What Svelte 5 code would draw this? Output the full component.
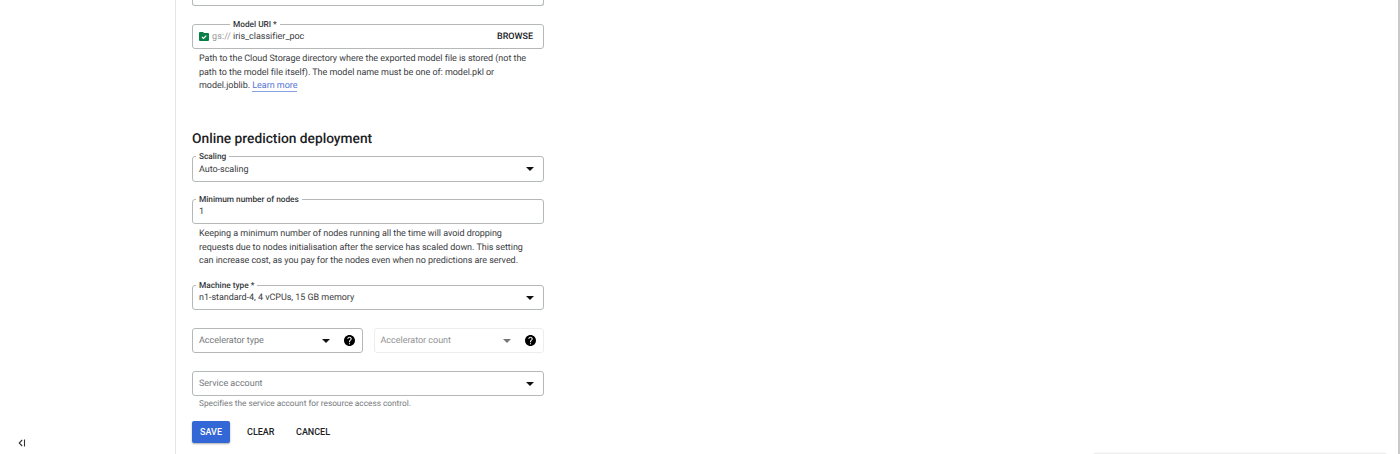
<script>
  const uriHelp = [
    'Path to the Cloud Storage directory where the exported model file is stored (not the',
    'path to the model file itself). The model name must be one of: model.pkl or',
  ];
  const nodeHelp = [
    'Keeping a minimum number of nodes running all the time will avoid dropping',
    'requests due to nodes initialisation after the service has scaled down. This setting',
    'can increase cost, as you pay for the nodes even when no predictions are served.',
  ];
</script>

{#snippet arrow()}
  <svg class="arrow" viewBox="0 0 8 4"><path d="M0 0h8L4 4z" /></svg>
{/snippet}

{#snippet help()}
  <svg class="help" viewBox="2 2 20 20"><path d="M12 2C6.48 2 2 6.48 2 12s4.48 10 10 10 10-4.48 10-10S17.52 2 12 2zm1 17h-2v-2h2v2zm2.07-7.75-.9.92C13.45 12.9 13 13.5 13 15h-2v-.5c0-1.1.45-2.1 1.17-2.83l1.24-1.26c.37-.36.59-.86.59-1.41 0-1.1-.9-2-2-2s-2 .9-2 2H8c0-2.21 1.79-4 4-4s4 1.79 4 4c0 .88-.36 1.68-.93 2.25z" /></svg>
{/snippet}

<div class="page">
  <aside>
    <svg class="collapse" viewBox="0 0 8 8"><path d="M4.2 1 1.2 4l3 3M6.5.6v6.8" /></svg>
  </aside>
  <main>
    <div class="field previous"></div>

    <div class="field uri">
      <span class="label offset">Model URI *</span>
      <svg class="folder" viewBox="0 0 10 9"><path d="M1 0h3l1 1h4a1 1 0 0 1 1 1V8a1 1 0 0 1-1 1H1a1 1 0 0 1-1-1V1a1 1 0 0 1 1-1z" fill="#087f43" /><path d="m3 5 1.500 1.500L7.300 3.700" fill="none" stroke="#fff" stroke-width="1.200" /></svg>
      <span class="prefix">gs://</span>
      <span class="value path">iris_classifier_poc</span>
      <span class="browse">BROWSE</span>
    </div>
    <div class="hint">
      {#each uriHelp as line}<div>{line}</div>{/each}
      <div>model.joblib. <a href="#learn">Learn more</a></div>
    </div>

    <h2>Online prediction deployment</h2>

    <div class="field">
      <span class="label">Scaling</span>
      <span class="value">Auto-scaling</span>
      {@render arrow()}
    </div>

    <div class="field nodes">
      <span class="label">Minimum number of nodes</span>
      <span class="value">1</span>
    </div>
    <div class="hint">
      {#each nodeHelp as line}<div>{line}</div>{/each}
    </div>

    <div class="field machine">
      <span class="label">Machine type *</span>
      <span class="value">n1-standard-4, 4 vCPUs, 15 GB memory</span>
      {@render arrow()}
    </div>

    <div class="pair">
      <div class="field">
        <span class="placeholder">Accelerator type</span>
        {@render arrow()}{@render help()}
      </div>
      <div class="field disabled">
        <span class="placeholder">Accelerator count</span>
        {@render arrow()}{@render help()}
      </div>
    </div>

    <div class="field account">
      <span class="placeholder">Service account</span>
      {@render arrow()}
    </div>
    <div class="note">Specifies the service account for resource access control.</div>

    <div class="actions">
      <button class="save">SAVE</button>
      <button class="clear">CLEAR</button>
      <button class="cancel">CANCEL</button>
    </div>
  </main>
  <div class="toast"></div>
  <div class="scroll"></div>
</div>

<style>
  :global(body) { margin: 0; background: #fff; }
  .page {
    position: relative;
    display: flex;
    height: 454px;
    overflow: hidden;
    background: #fff;
    color: #3c4043;
    font: 9px/14px Roboto, sans-serif;
    letter-spacing: -0.04px;
    text-rendering: geometricPrecision;
    white-space: nowrap;
  }
  aside {
    box-sizing: border-box;
    width: 176px;
    border-right: 1px solid #e4e4e4;
    display: flex;
    align-items: flex-end;
    padding: 0 0 7px 17.5px;
  }
  .collapse { width: 8px; height: 8px; fill: none; stroke: #333; stroke-width: 1.1; }
  main { width: 352px; padding-left: 16px; }
  .field {
    position: relative;
    box-sizing: border-box;
    height: 26px;
    border: 1px solid #b4b8b9;
    border-radius: 3px;
    display: flex;
    align-items: center;
    padding: 0 9px 0 6px;
  }
  .previous { height: 6px; border-top: 0; border-radius: 0 0 3px 3px; }
  .uri { margin-top: 18px; height: 25px; }
  .value, .placeholder, .prefix, .browse { padding-top: 1px; }
  .path { letter-spacing: -0.01px; }
  .label {
    position: absolute;
    left: 3px;
    top: -6px;
    padding: 0 3px;
    background: #fff;
    font-size: 8.3px;
    font-weight: 500;
    letter-spacing: -0.02px;
    line-height: 12px;
    color: #333639;
  }
  .label.offset { left: 37px; }
  .folder { width: 10px; height: 9px; margin-right: 3px; }
  .prefix { color: #999; width: 21px; letter-spacing: 0.1px; }
  .browse { margin-left: auto; margin-right: 1px; font-weight: 500; color: #202124; letter-spacing: 0; }
  .hint { padding: 3.900px 0 0 7px; line-height: 13.7px; }
  a { color: #5474d4; text-decoration: none; border-bottom: 1px solid #8ba2e2; }
  h2 {
    margin: 35.500px 0 8.500px;
    font-size: 13.75px;
    line-height: 18px;
    font-weight: 500;
    letter-spacing: 0;
    color: #202124;
  }
  .arrow { width: 8px; height: 4px; margin-left: auto; fill: #111; }
  .nodes { margin-top: 17px; height: 25px; }
  .machine { margin-top: 16px; height: 25px; }
  .machine .value { padding-top: 0; }
  .pair { display: grid; grid-template-columns: 170.500px 170.500px; gap: 11px; margin-top: 18px; }
  .pair .field { height: 25px; padding-right: 7px; }
  .help { width: 11px; height: 11px; margin-left: 14px; fill: #000; }
  .placeholder { color: #76797b; letter-spacing: -0.02px; }
  .disabled { border-color: #ededed; }
  .disabled .placeholder { color: #929496; }
  .disabled .arrow { fill: #777; }
  .account { margin-top: 18px; height: 25px; }
  .note { padding: 1px 0 0 7px; font-size: 8.3px; letter-spacing: -0.02px; color: #76797b; }
  .actions { display: flex; margin-top: 10px; }
  button {
    height: 22px;
    padding: 0;
    border: 0;
    background: none;
    color: #202124;
    font: 500 9px/22px Roboto, sans-serif;
    text-align: left;
  }
  .save { width: 38px; text-align: center; color: #fff; background: #3367d6; border-radius: 2px; box-shadow: 0 1px 2px #0005; }
  .clear { margin-left: 17px; width: 49px; }
  .toast { position: absolute; left: 1094px; top: 453px; width: 292px; height: 8px; background: #eee; box-shadow: 0 0 3px #0001; }
  .scroll { position: absolute; right: 0; top: 0; width: 2px; height: 454px; background: #c9c9c9; }
</style>
